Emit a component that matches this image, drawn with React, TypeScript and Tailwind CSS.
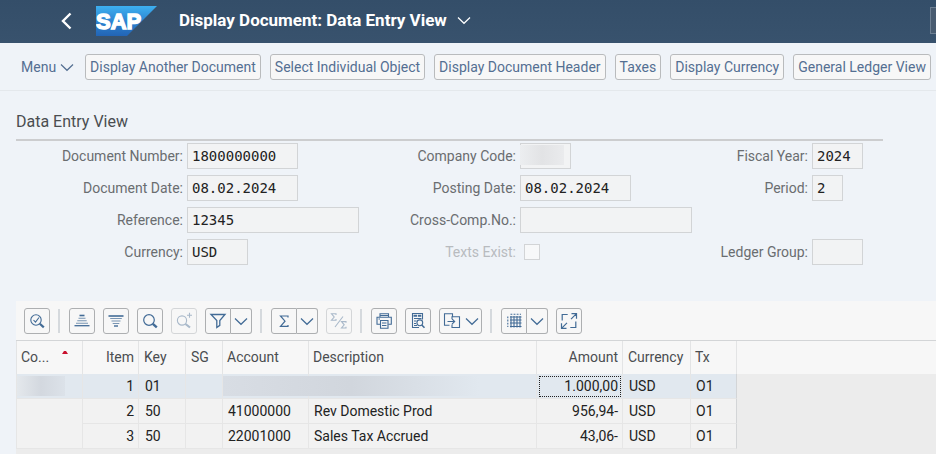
import type { ReactNode } from "react";
import clsx from "clsx";

const menuActions = [
  "Display Another Document",
  "Select Individual Object",
  "Display Document Header",
  "Taxes",
  "Display Currency",
  "General Ledger View",
];

interface LineItem {
  item: string;
  postingKey: string;
  account: string;
  description: string;
  amount: string;
  currency: string;
  taxCode: string;
  masked?: boolean;
}

const lineItems: LineItem[] = [
  { item: "1", postingKey: "01", account: "", description: "", amount: "1.000,00", currency: "USD", taxCode: "O1", masked: true },
  { item: "2", postingKey: "50", account: "41000000", description: "Rev Domestic Prod", amount: "956,94-", currency: "USD", taxCode: "O1" },
  { item: "3", postingKey: "50", account: "22001000", description: "Sales Tax Accrued", amount: "43,06-", currency: "USD", taxCode: "O1" },
];

function Icon({ children }: { children: ReactNode }) {
  return (
    <svg
      viewBox="0 0 18 18"
      className="h-[18px] w-[18px] shrink-0"
      fill="none"
      stroke="currentColor"
      strokeWidth="1.1"
      aria-hidden="true"
    >
      {children}
    </svg>
  );
}

function Chevron() {
  return (
    <svg viewBox="0 0 14 14" className="h-3.5 w-3.5 shrink-0" fill="none" stroke="currentColor" strokeWidth="1.2" aria-hidden="true">
      <path d="M1 4.5 7 10.3l6-5.8" />
    </svg>
  );
}

function SapLogo() {
  return (
    <svg viewBox="0 0 61 30" className="h-[30px] w-[61px]" role="img" aria-label="SAP">
      <defs>
        <linearGradient id="sap-blue" x1="0" y1="0" x2="0" y2="1">
          <stop offset="0" stopColor="#3db0f0" />
          <stop offset="0.5" stopColor="#2d85d2" />
          <stop offset="1" stopColor="#2264b5" />
        </linearGradient>
      </defs>
      <path d="M0 0h61L31 30H0Z" fill="url(#sap-blue)" />
      <text
        x="0"
        y="23"
        fill="#fff"
        stroke="#fff"
        strokeWidth="1.4"
        fontFamily="Liberation Sans, sans-serif"
        fontWeight="700"
        fontSize="22"
      >
        SAP
      </text>
    </svg>
  );
}

interface ToolButtonProps {
  label: string;
  children: ReactNode;
  disabled?: boolean;
  className?: string;
}

function ToolButton({ label, children, disabled, className }: ToolButtonProps) {
  return (
    <button
      type="button"
      aria-label={label}
      disabled={disabled}
      className={clsx(
        "flex h-[26px] items-center justify-center border",
        disabled ? "border-[#d4d6d8] text-[#a9b9ca]" : "border-[#adafb1] text-[#426b96]",
        className ?? "w-[26px] rounded-[3px]"
      )}
    >
      {children}
    </button>
  );
}

function SplitButton({ label, children }: { label: string; children: ReactNode }) {
  return (
    <div className="flex">
      <ToolButton label={label} className="w-[26px] rounded-l-[3px]">
        {children}
      </ToolButton>
      <ToolButton label={`${label} options`} className="w-[21px] rounded-r-[3px] border-l-0">
        <Chevron />
      </ToolButton>
    </div>
  );
}

function Separator() {
  return <span className="mr-px h-6 w-0.5 bg-[#d5d9dd]" />;
}

interface FieldProps {
  id: string;
  label: string;
  value?: string;
  width: string;
  masked?: boolean;
}

function Field({ id, label, value = "", width, masked }: FieldProps) {
  return (
    <>
      <label htmlFor={id} className="text-right whitespace-nowrap text-[#6a6d70]">
        {label}
      </label>
      <div className="relative">
        <input
          id={id}
          readOnly
          value={value}
          className={clsx(
            "block h-[26px] border border-[#d2d4d6] bg-[#f2f3f4] px-1 font-['DejaVu_Sans_Mono',monospace] text-sm text-[#222] outline-none",
            width
          )}
        />
        {masked && (
          <span className="absolute top-0.5 left-0 h-5 w-11 bg-linear-to-r from-[#eceef0] via-[#e2e3e5] to-[#eaebed]" />
        )}
      </div>
    </>
  );
}

function ListToolbar() {
  return (
    <div className="flex h-10 items-center gap-2 border-b border-[#d3d5d7] bg-[#f7f7f7] px-2">
      <ToolButton label="Details">
        <Icon>
          <circle cx="8" cy="8" r="5.2" />
          <path d="m5.5 8 2 2.2L11 5.5" />
          <path d="m11.8 11.8 4 3.6" strokeWidth="2.2" />
        </Icon>
      </ToolButton>
      <Separator />
      <ToolButton label="Sort ascending">
        <Icon>
          <path d="M6.5 3.5h5" strokeWidth="1.6" />
          <path d="M5.5 6.2h7M4.3 8.7h9.4M3 11.2h12" opacity="0.7" />
          <path d="M1.5 13.7h15" strokeWidth="1.3" />
        </Icon>
      </ToolButton>
      <ToolButton label="Sort descending">
        <Icon>
          <path d="M1.5 4h15" strokeWidth="1.6" />
          <path d="M3.2 6.5h11.6M4.5 9h9M5.7 11.5h6.6" opacity="0.7" />
          <path d="M7 14h4" strokeWidth="1.4" />
        </Icon>
      </ToolButton>
      <ToolButton label="Find">
        <Icon>
          <circle cx="8" cy="8" r="5.3" strokeWidth="1.2" />
          <path d="m11.8 11.8 4 3.6" strokeWidth="2.4" />
        </Icon>
      </ToolButton>
      <ToolButton label="Find next" disabled>
        <Icon>
          <circle cx="7" cy="8.5" r="4.6" />
          <path d="m10.5 12 4.5 3.5" strokeWidth="2.2" />
          <path d="M14.5.8v5M12 3.3h5" />
        </Icon>
      </ToolButton>
      <SplitButton label="Filter">
        <Icon>
          <path d="M2 2.5h14l-5.2 6v4.8l-3 2.2v-7Z" strokeWidth="1.3" />
        </Icon>
      </SplitButton>
      <Separator />
      <SplitButton label="Total">
        <Icon>
          <path d="M13 5.5V4H5.5L10 9.2l-4.5 5.2H13v-1.5" strokeWidth="1.2" />
        </Icon>
      </SplitButton>
      <ToolButton label="Subtotal" disabled>
        <Icon>
          <path d="M6 3V1.8H1.5L4.2 5 1.5 8.2H6V7M16 10.8V9.6h-4.5l2.7 3.2-2.7 3.2H16v-1.2M5 15l8-10.5" />
        </Icon>
      </ToolButton>
      <Separator />
      <ToolButton label="Print">
        <Icon>
          <path d="M5 5V1.8h8.5V5M5 12.3H2V5.2h14.3v7.1h-3" />
          <path d="M5.5 8.5H13v7.7H5.5ZM7 11h4.5M7 13.5h4.5M3.5 7H5M13 3.5H5" />
        </Icon>
      </ToolButton>
      <ToolButton label="Print preview">
        <Icon>
          <path d="M13.5 7.5v-6h-10v14H10" />
          <path d="M4.5 3.8h8" strokeWidth="2" strokeDasharray="3.5 0.8" />
          <path d="M5 6.5h7.5M5 9h2.5M5 11.5h2M5 13.5h3" />
          <circle cx="10.8" cy="10.8" r="2.9" />
          <path d="m12.8 13 2.7 2.7" strokeWidth="1.6" />
        </Icon>
      </ToolButton>
      <ToolButton label="Export" className="w-[43px] gap-1 rounded-[3px]">
        <Icon>
          <path d="M6.5 13.2h-5V1.7h8v2.5M9 7V4.7h7.5v10.8H9v-3M4.5 9.5h7M9 6.8l2.7 2.7L9 12.2" />
        </Icon>
        <Chevron />
      </ToolButton>
      <Separator />
      <SplitButton label="Layout">
        <Icon>
          <path d="M6 4v11.5M9 4v11.5M12 4v11.5M15 4v11.5M5 5h11.5M5 8h11.5M5 11h11.5M5 14.5h11.5" />
          <path d="M5.5 2.2H16M2.8 4.5V15" strokeDasharray="1.8 1.3" />
        </Icon>
      </SplitButton>
      <ToolButton label="Full screen">
        <Icon>
          <path
            d="M2.2 8.5v-6h5.5M15.8 9.5v6h-5.5M11.5 1.7h5v5M1.5 11.3v5h5M16.5 1.7 11 7.2M1.5 16.3 7 10.8"
            strokeWidth="1.2"
          />
        </Icon>
      </ToolButton>
    </div>
  );
}

function LineItemsTable() {
  const head = "border-r border-[#e3e4e5] pb-0.5 font-normal";
  const cell = "border-r border-b border-[#e6e6e6]";

  return (
    <table className="w-full table-fixed border-separate border-spacing-0 whitespace-nowrap">
      <colgroup>
        <col className="w-[67px]" />
        <col className="w-14" />
        <col className="w-[47px]" />
        <col className="w-[37px]" />
        <col className="w-[86px]" />
        <col className="w-[228px]" />
        <col className="w-[86px]" />
        <col className="w-[68px]" />
        <col className="w-[46px]" />
        <col />
      </colgroup>
      <thead className="bg-[#f7f7f7] text-left text-[#4a4d50]">
        <tr className="h-[33px]">
          <th scope="col" className={clsx(head, "relative border-l pl-1")}>
            Co...
            <svg viewBox="0 0 6 3" className="absolute top-2.5 right-3.5 h-[3px] w-1.5" aria-hidden="true">
              <path d="M0 3 2 0h2l2 3Z" fill="#c8102e" />
            </svg>
          </th>
          <th scope="col" className={clsx(head, "pr-1 text-right")}>Item</th>
          <th scope="col" className={clsx(head, "pl-[5px]")}>Key</th>
          <th scope="col" className={clsx(head, "pl-[5px]")}>SG</th>
          <th scope="col" className={clsx(head, "pl-1")}>Account</th>
          <th scope="col" className={clsx(head, "pl-1")}>Description</th>
          <th scope="col" className={clsx(head, "pr-1 text-right")}>Amount</th>
          <th scope="col" className={clsx(head, "pl-[5px]")}>Currency</th>
          <th scope="col" className={clsx(head, "border-[#d3d5d7] pl-1")}>Tx</th>
          <th />
        </tr>
      </thead>
      <tbody className="text-[#222]">
        {lineItems.map((line, index) => (
          <tr key={line.item} className={clsx("h-[25px]", line.masked ? "[&>td]:bg-[#e1e8ef]" : "[&>td]:bg-[#f2f2f2]")}>
            {index < 2 && (
              <td rowSpan={index === 1 ? 2 : 1} className={clsx(cell, "relative border-l")}>
                {line.masked && (
                  <span className="absolute top-0.5 left-0 h-5 w-12 bg-linear-to-r from-[#e4e8ec] via-[#d3d8df] to-[#dce2e9]" />
                )}
              </td>
            )}
            <td className={clsx(cell, "pr-1 text-right")}>{line.item}</td>
            <td className={clsx(cell, "pl-1.5")}>{line.postingKey}</td>
            <td className={cell} />
            <td className={clsx(cell, "relative pl-[5px]")}>
              {line.account}
              {line.masked && (
                <span className="absolute top-0.5 left-0 z-10 h-5 w-64 bg-linear-to-r from-[#d8dde4] via-[#d1d6dd] to-[#e1e8ef]" />
              )}
            </td>
            <td className={clsx(cell, "pl-[5px]")}>{line.description}</td>
            <td className={clsx(cell, "text-right", line.masked ? "pr-px pl-0.5" : "pr-1")}>
              {line.masked ? (
                <span className="block h-[21px] border border-dotted border-[#222] pr-0.5 leading-[19px]">{line.amount}</span>
              ) : (
                line.amount
              )}
            </td>
            <td className={clsx(cell, "pl-1.5")}>{line.currency}</td>
            <td className={clsx(cell, "border-r-[#d3d5d7] pl-[5px]")}>{line.taxCode}</td>
            {index === 0 && <td rowSpan={3} className="bg-[#ececec]!" />}
          </tr>
        ))}
      </tbody>
    </table>
  );
}

export default function App() {
  return (
    <div className="flex min-h-screen flex-col overflow-x-hidden bg-[#eff3f8] font-['Roboto',sans-serif] text-sm">
      <header className="flex h-[43px] items-center bg-linear-to-b from-[#344e69] to-[#38526d] pb-0.5 pl-[60px] text-white">
        <button type="button" aria-label="Back" className="mr-6 flex">
          <svg viewBox="0 0 12 18" className="h-[18px] w-3" fill="none" stroke="currentColor" strokeWidth="2.4" aria-hidden="true">
            <path d="M10.5 1.5 3 9l7.5 7.5" />
          </svg>
        </button>
        <SapLogo />
        <button type="button" className="ml-[22px] flex items-center gap-2.5 pb-0.5 text-[17px] leading-6 font-bold">
          <h1>Display Document: Data Entry View</h1>
          <Chevron />
        </button>
        <input aria-label="Search" className="-mr-2 ml-auto h-[27px] w-3.5 border border-[#6d7f92] bg-[#485b70]" />
      </header>

      <nav className="flex h-12 items-center gap-[9px] border-b border-[#e4e8ec] pl-[21px] whitespace-nowrap text-[#546f92]">
        <button type="button" className="mr-0.5 flex items-center gap-1">
          Menu
          <Chevron />
        </button>
        {menuActions.map((action) => (
          <button
            key={action}
            type="button"
            className="h-[26px] rounded-[3px] border border-[#b9bbbd] bg-[#f7f7f7] px-1"
          >
            {action}
          </button>
        ))}
      </nav>

      <section className="mt-[19px] mr-[53px] ml-4">
        <h2 className="border-b-2 border-[#cccdcf] pb-[5px] text-base leading-6 text-[#4a4d50]">Data Entry View</h2>
        <div className="mt-0.5 grid grid-cols-[167px_219px_106px_172px_1fr_71px] items-center gap-x-1 gap-y-1.5">
          <Field id="document-number" label="Document Number:" value="1800000000" width="w-[111px]" />
          <Field id="company-code" label="Company Code:" width="w-[51px]" masked />
          <Field id="fiscal-year" label="Fiscal Year:" value="2024" width="w-[51px]" />

          <Field id="document-date" label="Document Date:" value="08.02.2024" width="w-[111px]" />
          <Field id="posting-date" label="Posting Date:" value="08.02.2024" width="w-[111px]" />
          <Field id="period" label="Period:" value="2" width="w-[31px]" />

          <Field id="reference" label="Reference:" value="12345" width="w-[172px]" />
          <Field id="cross-comp" label="Cross-Comp.No.:" width="w-[172px]" />
          <div className="col-span-2" />

          <Field id="currency" label="Currency:" value="USD" width="w-[61px]" />
          <label htmlFor="texts-exist" className="text-right text-[#b8bbbf]">
            Texts Exist:
          </label>
          <input
            id="texts-exist"
            type="checkbox"
            disabled
            className="ml-1 h-4 w-4 appearance-none border border-[#d2d4d6] bg-[#f7f8f9]"
          />
          <Field id="ledger-group" label="Ledger Group:" width="w-[51px]" />
        </div>
      </section>

      <section className="mt-9 ml-4 flex-1 bg-[#ececec]">
        <ListToolbar />
        <LineItemsTable />
      </section>
    </div>
  );
}
